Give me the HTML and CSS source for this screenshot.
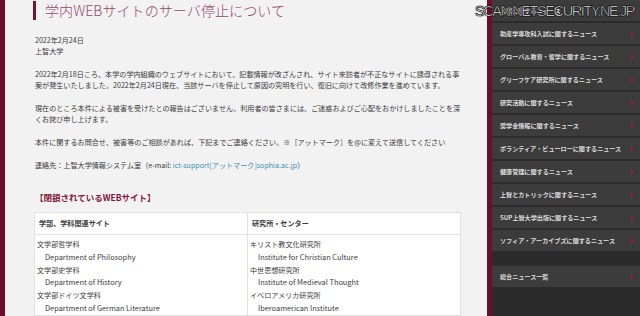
FILE: index.html
```html
<!DOCTYPE html>
<html lang="ja">
<head>
    <meta charset="UTF-8">
    <meta name="viewport" content="width=device-width, initial-scale=1.0">
    <title>学内WEBサイトのサーバ停止について</title>
    <link rel="stylesheet" href="styles.css">
</head>
<body>
    <div class="page">
        <main class="main">
            <h1 class="page-title">学内WEBサイトのサーバ停止について</h1>
            <p class="meta">2022年2月24日<br>上智大学</p>
            <p>2022年2月18日ころ、本学の学内組織のウェブサイトにおいて、記載情報が改ざんされ、サイト来訪者が不正なサイトに誘導される事案が発生いたしました。2022年2月24日現在、当該サーバを停止して原因の究明を行い、復旧に向けて改修作業を進めています。</p>
            <p>現在のところ本件による被害を受けたとの報告はございません。利用者の皆さまには、ご迷惑およびご心配をおかけしましたことを深くお詫び申し上げます。</p>
            <p>本件に関するお問合せ、被害等のご相談があれば、下記までご連絡ください。<span class="note">※</span>［アットマーク］を@に変えて送信してください</p>
            <p>連絡先：上智大学情報システム室（e-mail: <a href="#">ict-support[アットマーク]sophia.ac.jp</a>）</p>

            <h2 class="section-title">【閉鎖されているWEBサイト】</h2>
            <table class="site-table">
                <thead>
                    <tr>
                        <th>学部、学科関連サイト</th>
                        <th>研究所・センター</th>
                    </tr>
                </thead>
                <tbody>
                    <tr>
                        <td>
                            <ul class="site-list">
                                <li>文学部哲学科</li>
                                <li class="en">Department of Philosophy</li>
                                <li>文学部史学科</li>
                                <li class="en">Department of History</li>
                                <li>文学部ドイツ文学科</li>
                                <li class="en">Department of German Literature</li>
                            </ul>
                        </td>
                        <td>
                            <ul class="site-list">
                                <li>キリスト教文化研究所</li>
                                <li class="en">Institute for Christian Culture</li>
                                <li>中世思想研究所</li>
                                <li class="en">Institute of Medieval Thought</li>
                                <li>イベロアメリカ研究所</li>
                                <li class="en">Iberoamerican Institute</li>
                            </ul>
                        </td>
                    </tr>
                </tbody>
            </table>
        </main>

        <aside class="sidebar">
            <ul class="news-list">
                <li><a href="#">入試に関するニュース</a></li>
                <li><a href="#">助産学専攻科入試に関するニュース</a></li>
                <li><a href="#">グローバル教育・留学に関するニュース</a></li>
                <li><a href="#">グリーフケア研究所に関するニュース</a></li>
                <li><a href="#">研究活動に関するニュース</a></li>
                <li><a href="#">奨学金情報に関するニュース</a></li>
                <li><a href="#">ボランティア・ビューローに関するニュース</a></li>
                <li><a href="#">健康管理に関するニュース</a></li>
                <li><a href="#">上智とカトリックに関するニュース</a></li>
                <li><a href="#">SUP上智大学出版に関するニュース</a></li>
                <li><a href="#">ソフィア・アーカイブズに関するニュース</a></li>
            </ul>
            <ul class="news-list news-all">
                <li><a href="#">総合ニュース一覧</a></li>
            </ul>
        </aside>
    </div>

    <div class="watermark">SCAN.NETSECURITY.NE.JP</div>
</body>
</html>
```

FILE: styles.css
```css
body {
    margin: 0;
    padding: 0;
    height: 316px;
    overflow: hidden;
    background: #f2f2f2;
    font-family: "Noto Sans CJK JP", "Noto Sans", sans-serif;
    color: #3a3a3a;
}
.page {
    display: flex;
    height: 316px;
}
.main {
    flex: 1;
    border-left: 5px solid #6c0d2d;
    padding: 1px 26px 0 30px;
    font-size: 7.1px;
    line-height: 11px;
}
.page-title {
    margin: 0 0 0 -2px;
    padding-left: 9px;
    border-left: 3px solid #7a1233;
    font-size: 14.1px;
    line-height: 19px;
    font-weight: 300;
    color: #94496c;
}
p {
    margin: 12px 0 0;
}
.meta {
    margin-top: 15px;
}
.note {
    color: #3a3a3a;
    font-family: "Noto Sans CJK JP", sans-serif;
}
a {
    color: #3b8fb4;
    text-decoration: none;
}
.section-title {
    margin: 20px 0 9px;
    font-size: 8.5px;
    line-height: 12px;
    font-weight: bold;
    color: #85163a;
}
.site-table {
    width: 427px;
    margin-left: -1px;
    border-collapse: collapse;
    background: #fff;
    border: 1px solid #e2e2e2;
}
.site-table th {
    height: 21px;
    padding: 0 4px;
    text-align: left;
    font-weight: bold;
    border-bottom: 1px solid #e2e2e2;
    border-right: 1px solid #e2e2e2;
    width: 50%;
}
.site-table td {
    padding: 3px 2px 0;
    vertical-align: top;
    border-right: 1px solid #e2e2e2;
}
.site-list {
    list-style: none;
    margin: 0;
    padding: 0;
    line-height: 12.8px;
}
.site-list .en {
    padding-left: 8px;
    font-size: 7.4px;
}
.sidebar {
    width: 148px;
    border-left: 5px solid #6c0f2f;
    background: #2b2b2b;
}
.news-list {
    list-style: none;
    margin: 0;
    padding: 0;
    display: flex;
    flex-direction: column;
    gap: 2px;
}
.news-list a {
    display: flex;
    align-items: center;
    justify-content: space-between;
    height: 21px;
    padding: 0 6px 0 8px;
    background: #3c3c3c;
    color: #dcdcdc;
    font-size: 6.1px;
    font-weight: bold;
}
.news-list a::after {
    content: "";
    border-left: 3px solid #9d1b3d;
    border-top: 3px solid transparent;
    border-bottom: 3px solid transparent;
}
.news-all {
    margin-top: 15px;
}
.watermark {
    position: absolute;
    top: 3px;
    right: 6px;
    font-family: "Liberation Sans", Arial, sans-serif;
    font-size: 14.5px;
    letter-spacing: -1.4px;
    color: #fff;
    -webkit-text-stroke: 0.5px #000;
    text-shadow: 0 0 1px #000, 0 0 1px #000;
}
```
